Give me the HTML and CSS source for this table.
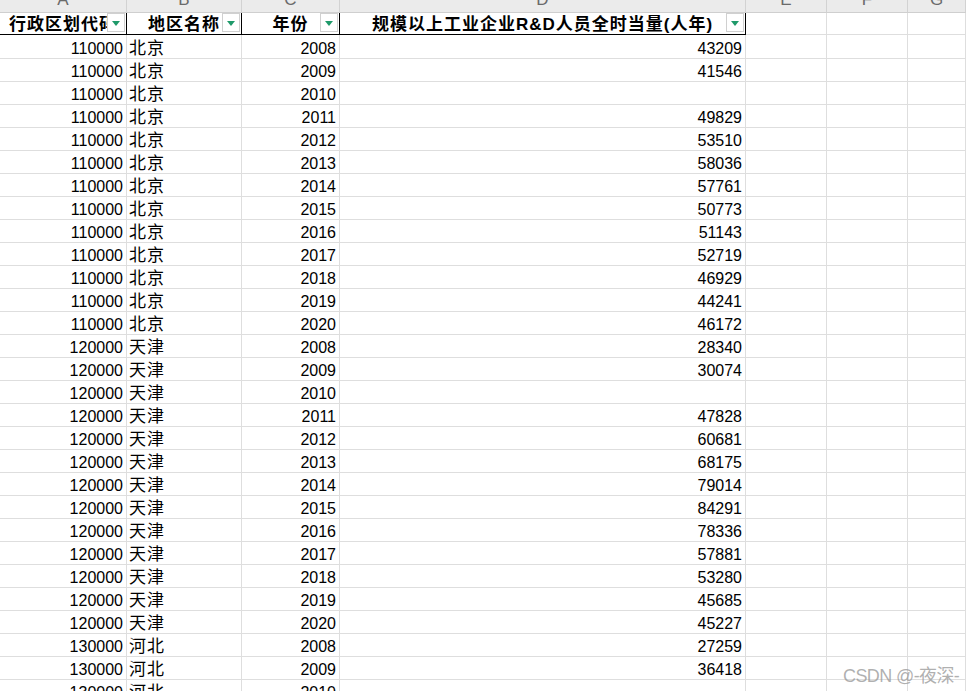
FILE: index.html
```html
<!DOCTYPE html>
<html lang="zh">
<head>
<meta charset="utf-8">
<title>Sheet</title>
<link rel="stylesheet" href="styles.css">
</head>
<body>
<div class="sheet">
  <div class="row letters">
    <div class="c"><span>A</span></div><div class="c"><span>B</span></div><div class="c"><span>C</span></div><div class="c"><span>D</span></div><div class="c"><span>E</span></div><div class="c"><span>F</span></div><div class="c"><span>G</span></div>
  </div>
  <div class="row head">
    <div class="c h"><span class="ht">行政区划代码</span><span class="filter"></span></div>
    <div class="c h"><span class="ht">地区名称</span><span class="filter"></span></div>
    <div class="c h"><span class="ht">年份</span><span class="filter"></span></div>
    <div class="c h"><span class="ht">规模以上工业企业R&amp;D人员全时当量(人年)</span><span class="filter"></span></div>
    <div class="c e"></div><div class="c e"></div><div class="c e"></div>
  </div>
  <div class="row data first"><div class="c num">110000</div><div class="c txt">北京</div><div class="c num">2008</div><div class="c num">43209</div><div class="c"></div><div class="c"></div><div class="c"></div></div>
  <div class="row data"><div class="c num">110000</div><div class="c txt">北京</div><div class="c num">2009</div><div class="c num">41546</div><div class="c"></div><div class="c"></div><div class="c"></div></div>
  <div class="row data"><div class="c num">110000</div><div class="c txt">北京</div><div class="c num">2010</div><div class="c num"></div><div class="c"></div><div class="c"></div><div class="c"></div></div>
  <div class="row data"><div class="c num">110000</div><div class="c txt">北京</div><div class="c num">2011</div><div class="c num">49829</div><div class="c"></div><div class="c"></div><div class="c"></div></div>
  <div class="row data"><div class="c num">110000</div><div class="c txt">北京</div><div class="c num">2012</div><div class="c num">53510</div><div class="c"></div><div class="c"></div><div class="c"></div></div>
  <div class="row data"><div class="c num">110000</div><div class="c txt">北京</div><div class="c num">2013</div><div class="c num">58036</div><div class="c"></div><div class="c"></div><div class="c"></div></div>
  <div class="row data"><div class="c num">110000</div><div class="c txt">北京</div><div class="c num">2014</div><div class="c num">57761</div><div class="c"></div><div class="c"></div><div class="c"></div></div>
  <div class="row data"><div class="c num">110000</div><div class="c txt">北京</div><div class="c num">2015</div><div class="c num">50773</div><div class="c"></div><div class="c"></div><div class="c"></div></div>
  <div class="row data"><div class="c num">110000</div><div class="c txt">北京</div><div class="c num">2016</div><div class="c num">51143</div><div class="c"></div><div class="c"></div><div class="c"></div></div>
  <div class="row data"><div class="c num">110000</div><div class="c txt">北京</div><div class="c num">2017</div><div class="c num">52719</div><div class="c"></div><div class="c"></div><div class="c"></div></div>
  <div class="row data"><div class="c num">110000</div><div class="c txt">北京</div><div class="c num">2018</div><div class="c num">46929</div><div class="c"></div><div class="c"></div><div class="c"></div></div>
  <div class="row data"><div class="c num">110000</div><div class="c txt">北京</div><div class="c num">2019</div><div class="c num">44241</div><div class="c"></div><div class="c"></div><div class="c"></div></div>
  <div class="row data"><div class="c num">110000</div><div class="c txt">北京</div><div class="c num">2020</div><div class="c num">46172</div><div class="c"></div><div class="c"></div><div class="c"></div></div>
  <div class="row data"><div class="c num">120000</div><div class="c txt">天津</div><div class="c num">2008</div><div class="c num">28340</div><div class="c"></div><div class="c"></div><div class="c"></div></div>
  <div class="row data"><div class="c num">120000</div><div class="c txt">天津</div><div class="c num">2009</div><div class="c num">30074</div><div class="c"></div><div class="c"></div><div class="c"></div></div>
  <div class="row data"><div class="c num">120000</div><div class="c txt">天津</div><div class="c num">2010</div><div class="c num"></div><div class="c"></div><div class="c"></div><div class="c"></div></div>
  <div class="row data"><div class="c num">120000</div><div class="c txt">天津</div><div class="c num">2011</div><div class="c num">47828</div><div class="c"></div><div class="c"></div><div class="c"></div></div>
  <div class="row data"><div class="c num">120000</div><div class="c txt">天津</div><div class="c num">2012</div><div class="c num">60681</div><div class="c"></div><div class="c"></div><div class="c"></div></div>
  <div class="row data"><div class="c num">120000</div><div class="c txt">天津</div><div class="c num">2013</div><div class="c num">68175</div><div class="c"></div><div class="c"></div><div class="c"></div></div>
  <div class="row data"><div class="c num">120000</div><div class="c txt">天津</div><div class="c num">2014</div><div class="c num">79014</div><div class="c"></div><div class="c"></div><div class="c"></div></div>
  <div class="row data"><div class="c num">120000</div><div class="c txt">天津</div><div class="c num">2015</div><div class="c num">84291</div><div class="c"></div><div class="c"></div><div class="c"></div></div>
  <div class="row data"><div class="c num">120000</div><div class="c txt">天津</div><div class="c num">2016</div><div class="c num">78336</div><div class="c"></div><div class="c"></div><div class="c"></div></div>
  <div class="row data"><div class="c num">120000</div><div class="c txt">天津</div><div class="c num">2017</div><div class="c num">57881</div><div class="c"></div><div class="c"></div><div class="c"></div></div>
  <div class="row data"><div class="c num">120000</div><div class="c txt">天津</div><div class="c num">2018</div><div class="c num">53280</div><div class="c"></div><div class="c"></div><div class="c"></div></div>
  <div class="row data"><div class="c num">120000</div><div class="c txt">天津</div><div class="c num">2019</div><div class="c num">45685</div><div class="c"></div><div class="c"></div><div class="c"></div></div>
  <div class="row data"><div class="c num">120000</div><div class="c txt">天津</div><div class="c num">2020</div><div class="c num">45227</div><div class="c"></div><div class="c"></div><div class="c"></div></div>
  <div class="row data"><div class="c num">130000</div><div class="c txt">河北</div><div class="c num">2008</div><div class="c num">27259</div><div class="c"></div><div class="c"></div><div class="c"></div></div>
  <div class="row data"><div class="c num">130000</div><div class="c txt">河北</div><div class="c num">2009</div><div class="c num">36418</div><div class="c"></div><div class="c"></div><div class="c"></div></div>
  <div class="row data"><div class="c num">130000</div><div class="c txt">河北</div><div class="c num">2010</div><div class="c num"></div><div class="c"></div><div class="c"></div><div class="c"></div></div>
</div>
<div class="watermark">CSDN @-夜深-</div>
</body>
</html>
```

FILE: styles.css
```css
html, body {
  margin: 0;
  padding: 0;
  background: #ffffff;
  overflow: hidden;
}

body {
  width: 966px;
  height: 691px;
  position: relative;
  font-family: "Liberation Sans", "Noto Sans CJK SC", sans-serif;
  color: #000;
}

.sheet {
  display: flex;
  flex-direction: column;
}

.row {
  display: grid;
  grid-template-columns: 127px 115px 98px 406px 81px 81px 1fr;
  height: 23px;
}

.c {
  box-sizing: border-box;
  border-right: 1px solid #dedede;
  border-bottom: 1px solid #dedede;
  display: flex;
  align-items: flex-end;
  min-width: 0;
  overflow: hidden;
}

/* column letters row */
.letters {
  height: 13px;
  background: #ebebeb;
}

.letters .c {
  border-right-color: #d2d2d2;
  border-bottom-color: #cfcfcf;
  align-items: flex-start;
  justify-content: center;
}

.letters span {
  display: block;
  font-size: 17px;
  line-height: 18px;
  margin-top: -9px;
  color: #6a6a6a;
}

/* filter header row */
.head {
  height: 22px;
}

.head .h {
  position: relative;
  border-right: 1px solid #000;
  border-bottom: 1px solid #000;
  justify-content: center;
  overflow: hidden;
}

.head .e {
  border-bottom-color: #dedede;
}

.ht {
  font-weight: bold;
  font-size: 17px;
  letter-spacing: 1px;
  line-height: 18px;
  white-space: nowrap;
}

.filter {
  position: absolute;
  right: 1px;
  top: 0;
  width: 18px;
  height: 19px;
  box-sizing: border-box;
  background: #fff;
  border: 1px solid #d0d0d0;
  display: flex;
  align-items: center;
  justify-content: center;
}

.filter::after {
  content: "";
  width: 0;
  height: 0;
  margin-top: 2px;
  border-left: 4px solid transparent;
  border-right: 4px solid transparent;
  border-top: 5px solid #1f9a6a;
}

/* data rows */
.data.first {
  height: 24px;
}

.data .c {
  font-size: 16px;
  line-height: 18px;
  white-space: nowrap;
}

.num {
  justify-content: flex-end;
  padding-right: 3px;
}

.txt {
  justify-content: flex-start;
  padding-left: 2px;
}

.data .txt {
  font-size: 17px;
  letter-spacing: 1px;
}

.watermark {
  position: absolute;
  left: 843px;
  top: 661px;
  font-size: 18px;
  letter-spacing: -0.6px;
  color: rgba(150, 150, 150, 0.75);
  white-space: nowrap;
}
```
